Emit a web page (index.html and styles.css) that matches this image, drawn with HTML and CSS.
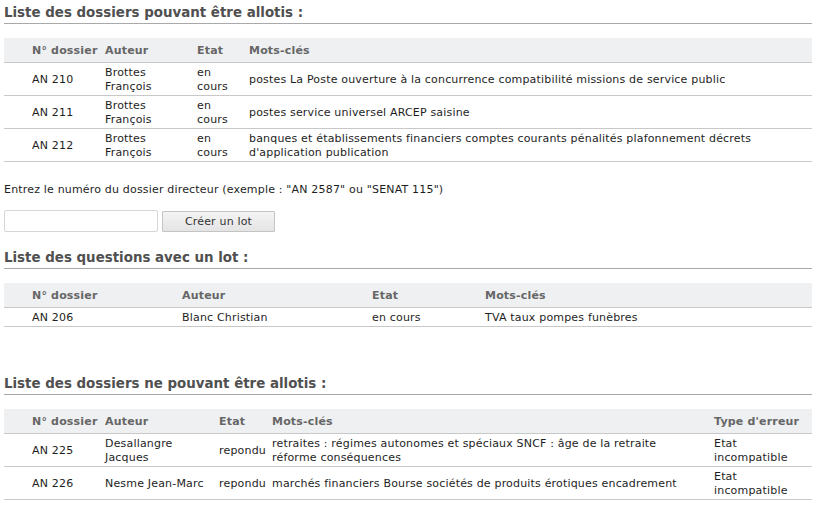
FILE: index.html
```html
<!DOCTYPE html>
<html lang="fr">
<head>
<meta charset="utf-8">
<title>Allotissement</title>
<link rel="stylesheet" href="styles.css">
</head>
<body>
<div class="page">
  <h2 class="section-title">Liste des dossiers pouvant être allotis :</h2>
  <table class="grid grid-a">
    <colgroup><col class="c-sel"><col class="c-num"><col class="c-aut"><col class="c-etat"><col></colgroup>
    <thead>
      <tr><th></th><th>N° dossier</th><th>Auteur</th><th>Etat</th><th>Mots-clés</th></tr>
    </thead>
    <tbody>
      <tr><td></td><td>AN 210</td><td>Brottes François</td><td>en cours</td><td>postes La Poste ouverture à la concurrence compatibilité missions de service public</td></tr>
      <tr><td></td><td>AN 211</td><td>Brottes François</td><td>en cours</td><td>postes service universel ARCEP saisine</td></tr>
      <tr><td></td><td>AN 212</td><td>Brottes François</td><td>en cours</td><td>banques et établissements financiers comptes courants pénalités plafonnement décrets d'application publication</td></tr>
    </tbody>
  </table>

  <p class="hint">Entrez le numéro du dossier directeur (exemple : "AN 2587" ou "SENAT 115")</p>
  <div class="lot-form">
    <input class="lot-input" type="text">
    <button class="lot-btn" type="button">Créer un lot</button>
  </div>

  <h2 class="section-title">Liste des questions avec un lot :</h2>
  <table class="grid grid-b">
    <colgroup><col class="c-sel"><col class="c-num"><col class="c-aut"><col class="c-etat"><col></colgroup>
    <thead>
      <tr><th></th><th>N° dossier</th><th>Auteur</th><th>Etat</th><th>Mots-clés</th></tr>
    </thead>
    <tbody>
      <tr><td></td><td>AN 206</td><td>Blanc Christian</td><td>en cours</td><td>TVA taux pompes funèbres</td></tr>
    </tbody>
  </table>

  <h2 class="section-title spaced">Liste des dossiers ne pouvant être allotis :</h2>
  <table class="grid grid-c">
    <colgroup><col class="c-sel"><col class="c-num"><col class="c-aut"><col class="c-etat"><col class="c-mots"><col></colgroup>
    <thead>
      <tr><th></th><th>N° dossier</th><th>Auteur</th><th>Etat</th><th>Mots-clés</th><th>Type d'erreur</th></tr>
    </thead>
    <tbody>
      <tr><td></td><td>AN 225</td><td>Desallangre Jacques</td><td>repondu</td><td class="kw">retraites : régimes autonomes et spéciaux SNCF : âge de la retraite réforme conséquences</td><td>Etat incompatible</td></tr>
      <tr><td></td><td>AN 226</td><td>Nesme Jean-Marc</td><td>repondu</td><td class="kw">marchés financiers Bourse sociétés de produits érotiques encadrement</td><td>Etat incompatible</td></tr>
    </tbody>
  </table>
</div>
</body>
</html>
```

FILE: styles.css
```css
html, body {
  margin: 0;
  padding: 0;
  background: #fff;
}

body {
  font-family: "DejaVu Sans", Verdana, sans-serif;
  font-size: 11px;
  line-height: 14px;
  letter-spacing: 0.18px;
  color: #1e1e1e;
}

.page {
  width: 808px;
  padding: 0 4px;
}

.section-title {
  margin: 0;
  padding: 5px 0 2px;
  font-size: 13.4px;
  line-height: 16px;
  letter-spacing: 0;
  font-weight: bold;
  color: #505050;
  border-bottom: 1px solid #a9a9a9;
}

.section-title.spaced {
  margin-top: 44px;
}

.grid {
  width: 100%;
  margin-top: 14px;
  border-collapse: collapse;
  table-layout: fixed;
}

.grid th {
  background: #eff0f2;
  color: #666;
  font-weight: bold;
  text-align: left;
  padding: 6px 4px 4px;
  border-bottom: 1px solid #c8c8c8;
  white-space: nowrap;
}

.grid td {
  padding: 3px 4px 1px;
  vertical-align: middle;
  border-bottom: 1px solid #c8c8c8;
}

.grid td.kw {
  padding-right: 12px;
}

.grid .c-sel { width: 24px; }

.grid-a .c-num { width: 73px; }
.grid-a .c-aut { width: 92px; }
.grid-a .c-etat { width: 52px; }

.grid-b .c-num { width: 150px; }
.grid-b .c-aut { width: 190px; }
.grid-b .c-etat { width: 113px; }

.grid-c .c-num { width: 73px; }
.grid-c .c-aut { width: 114px; }
.grid-c .c-etat { width: 53px; }
.grid-c .c-mots { width: 442px; }

.hint {
  margin: 21px 0 0;
}

.lot-form {
  display: flex;
  align-items: center;
  gap: 4px;
  margin-top: 13px;
  margin-bottom: 13px;
}

.lot-input {
  box-sizing: border-box;
  width: 154px;
  height: 22px;
  margin: 0;
  border: 1px solid #d6d6d6;
  border-radius: 2px;
  background: #fff;
}

.lot-btn {
  box-sizing: border-box;
  width: 113px;
  height: 21px;
  margin: 0;
  padding: 1px 0 0;
  font-family: "DejaVu Sans", Verdana, sans-serif;
  font-size: 11px;
  letter-spacing: 0.18px;
  color: #333;
  background: linear-gradient(#f4f4f4, #e4e4e4);
  border: 1px solid #c4c4c4;
  border-radius: 1px;
}
```
